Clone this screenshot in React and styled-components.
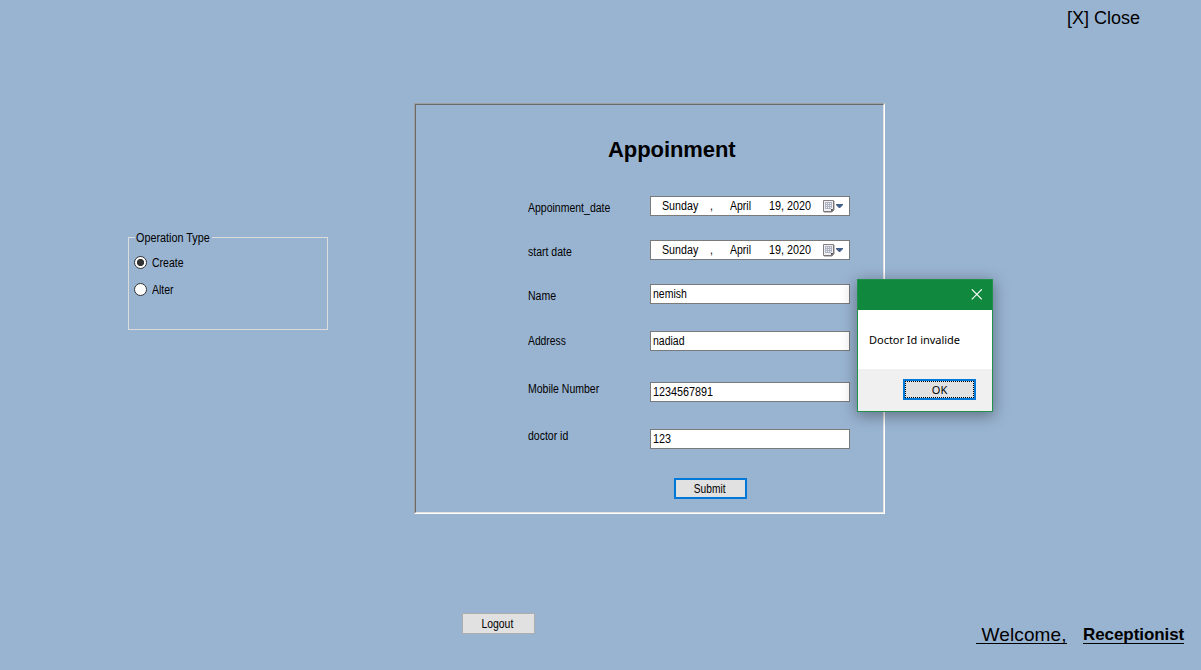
import React from "react";
import styled, { createGlobalStyle } from "styled-components";

const Global = createGlobalStyle`
  * { box-sizing: border-box; }
  body { margin: 0; background: #99b4d1; }
`;

const Page = styled.div`
  position: relative;
  width: 1201px;
  height: 670px;
  overflow: hidden;
  display: flex;
  flex-direction: column;
  background: #99b4d1;
  color: #000;
  font-family: "Liberation Sans", Arial, sans-serif;
  font-size: 12px;
  line-height: 14px;
`;

const Text = styled.span`
  display: block;
  white-space: pre;
  transform: scaleX(${(p) => p.$fit || 0.875});
  transform-origin: ${(p) => (p.$center ? "center" : "left")};
`;

const Header = styled.header`
  height: 103px;
  display: flex;
  justify-content: flex-end;
  padding: 7px 61px 0 0;
`;

const CloseLink = styled.span`
  height: 22px;
  font-size: 18px;
  line-height: 22px;
`;

const Main = styled.main`
  height: 411px;
  display: flex;
  align-items: flex-start;
`;

const GroupBox = styled.section`
  width: 200px;
  height: 93px;
  margin: 134px 86px 0 128px;
  border: 1px solid #dcdcdc;
  display: flex;
  flex-direction: column;
`;

const GroupTitle = styled.h2`
  width: 77px;
  height: 14px;
  margin: -7px 0 0 6px;
  padding-left: 1px;
  background: #99b4d1;
  font: inherit;
`;

const RadioRow = styled.div`
  height: 14px;
  margin: ${(p) => p.$top}px 0 0 5px;
  display: flex;
  align-items: flex-start;
  gap: 5px;
`;

const RadioDot = styled.span`
  width: 13px;
  height: 13px;
  flex: none;
  border: 1px solid #333;
  border-radius: 50%;
  background: ${(p) =>
    p.$on ? "radial-gradient(circle, #333 3.2px, #fff 4px)" : "#fff"};
`;

const Panel = styled.section`
  width: 471px;
  height: 411px;
  border: 1px solid;
  border-color: #a0a0a0 #fff #fff #a0a0a0;
`;

const PanelInner = styled.div`
  height: 100%;
  border: 1px solid;
  border-color: #696969 #e3e3e3 #e3e3e3 #696969;
  padding-left: 112px;
`;

const Title = styled.h1`
  margin: 32px 0 0 80px;
  height: 26px;
  font-size: 22px;
  line-height: 26px;
  letter-spacing: -0.08px;
`;

const Row = styled.div`
  height: 20px;
  margin-top: ${(p) => p.$top}px;
  display: grid;
  grid-template-columns: 122px 200px;
`;

const Label = styled.label`
  margin-top: ${(p) => p.$shift}px;
  height: 14px;
`;

const Field = styled.div`
  height: 20px;
  border: 1px solid #7a7a7a;
  background: #fff;
  padding: 2px 0 0 2px;
`;

const DateField = styled(Field)`
  display: grid;
  grid-template-columns: 48px 20px 39px 54px 21px;
  padding: 2px 0 0 11px;
`;

const Button = styled.button`
  width: 73px;
  height: 21px;
  padding: 0 2px 0 0;
  display: flex;
  align-items: center;
  justify-content: center;
  font: inherit;
  color: #000;
  background: #e1e1e1;
  border: ${(p) => (p.$active ? "2px solid #0078d7" : "1px solid #adadad")};
`;

const SubmitRow = styled.div`
  margin: 29px 0 0 146px;
`;

const Footer = styled.footer`
  flex: 1;
  display: flex;
  align-items: flex-start;
  padding: 99px 0 0 462px;
`;

const Welcome = styled.span`
  margin: 9px 0 0 441px;
  width: 91px;
  height: 22px;
  border-bottom: 1px solid #000;
  white-space: pre;
  font-size: 19px;
  line-height: 25px;
  letter-spacing: 0.15px;
`;

const Role = styled.span`
  margin: 9px 0 0 16px;
  width: 101px;
  height: 22px;
  border-bottom: 1px solid #000;
  font-size: 17px;
  font-weight: bold;
  line-height: 26px;
  letter-spacing: -0.07px;
`;

const Dialog = styled.div`
  position: absolute;
  left: 857px;
  top: 279px;
  width: 136px;
  height: 133px;
  border: 1px solid #21904a;
  background: #fff;
  box-shadow: 0 3px 14px 1px rgba(0, 0, 0, 0.36);
  font-family: "Noto Sans", sans-serif;
  font-size: 11px;
`;

const DialogBar = styled.div`
  height: 30px;
  background: #10893e;
  display: flex;
  justify-content: flex-end;
  align-items: flex-start;
  padding: 9px 10px 0 0;
`;

const DialogBody = styled.div`
  height: 59px;
  padding: 23px 0 0 11px;
  letter-spacing: -0.02px;
`;

const DialogFoot = styled.div`
  height: 42px;
  background: #f0f0f0;
  display: flex;
  justify-content: flex-end;
  padding: 10px 16px 0 0;
`;

const OkButton = styled(Button)`
  padding: 0;
`;

const Focus = styled.span`
  flex: 1;
  height: 17px;
  border: 1px dotted #000;
  line-height: 15px;
`;

const CalendarIcon = () => (
  <svg width="21" height="14" viewBox="0 0 21 14">
    <path d="M0.5 1.5h10v9l-2 2h-8Z" fill="#f0f0f4" stroke="#857f80" />
    <path d="M11 2v9l-2 2H1" fill="none" stroke="#6b6466" strokeWidth="0.8" />
    <path d="M8 12.5v-2.5h2.5Z" fill="#4d4a50" />
    <path
      d="M2.5 3v7M4.5 3v7M6.5 3v7M8.5 3v6M2 3.5h7M2 5.5h7M2 7.5h7M2 9.5h6"
      stroke="#a9afbe"
      strokeWidth="0.9"
    />
    <path d="M13 5h7v1l-3 3h-1l-3-3Z" fill="#44608a" />
  </svg>
);

const DateInput = () => (
  <DateField>
    <Text $fit={0.89}>Sunday</Text>
    <Text>,</Text>
    <Text>April</Text>
    <Text $fit={0.9}>19, 2020</Text>
    <CalendarIcon />
  </DateField>
);

export default function App() {
  return (
    <>
      <Global />
      <Page>
        <Header>
          <CloseLink>[X] Close</CloseLink>
        </Header>
        <Main>
          <GroupBox>
            <GroupTitle>
              <Text $fit={0.9}>Operation Type</Text>
            </GroupTitle>
            <RadioRow $top={11}>
              <RadioDot $on />
              <Text>Create</Text>
            </RadioRow>
            <RadioRow $top={13}>
              <RadioDot />
              <Text>Alter</Text>
            </RadioRow>
          </GroupBox>
          <Panel>
            <PanelInner>
              <Title>Appoinment</Title>
              <Row $top={33}>
                <Label $shift={5}><Text>Appoinment_date</Text></Label>
                <DateInput />
              </Row>
              <Row $top={24}>
                <Label $shift={5}><Text>start date</Text></Label>
                <DateInput />
              </Row>
              <Row $top={24}>
                <Label $shift={5}><Text>Name</Text></Label>
                <Field><Text>nemish</Text></Field>
              </Row>
              <Row $top={27}>
                <Label $shift={3}><Text $fit={0.86}>Address</Text></Label>
                <Field><Text>nadiad</Text></Field>
              </Row>
              <Row $top={31}>
                <Label $shift={0}><Text>Mobile Number</Text></Label>
                <Field><Text $fit={0.9}>1234567891</Text></Field>
              </Row>
              <Row $top={27}>
                <Label $shift={0}><Text>doctor id</Text></Label>
                <Field><Text $fit={0.9}>123</Text></Field>
              </Row>
              <SubmitRow>
                <Button $active><Text $center $fit={0.85}>Submit</Text></Button>
              </SubmitRow>
            </PanelInner>
          </Panel>
        </Main>
        <Footer>
          <Button><Text $center $fit={0.87}>Logout</Text></Button>
          <Welcome> Welcome,</Welcome>
          <Role>Receptionist</Role>
        </Footer>
        <Dialog>
          <DialogBar>
            <svg width="11" height="11" viewBox="0 0 11 11">
              <path d="M0.8 0.3l10 10M10.8 0.3l-10 10" stroke="#fff" strokeWidth="1.1" />
            </svg>
          </DialogBar>
          <DialogBody>Doctor Id invalide</DialogBody>
          <DialogFoot>
            <OkButton $active>
              <Focus>OK</Focus>
            </OkButton>
          </DialogFoot>
        </Dialog>
      </Page>
    </>
  );
}
